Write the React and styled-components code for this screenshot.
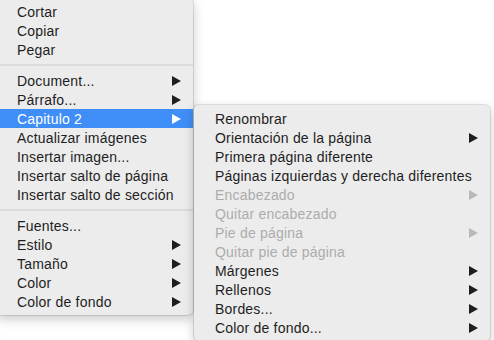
import React from 'react';
import styled, { createGlobalStyle } from 'styled-components';

const GlobalStyle = createGlobalStyle`
  html, body {
    margin: 0;
    background: #ffffff;
    overflow: hidden;
  }
`;

const Desk = styled.div`
  display: flex;
  align-items: flex-start;
  gap: 1px;
  width: 494px;
  height: 340px;
  font-family: "Liberation Sans", Arial, sans-serif;
`;

const Menu = styled.div`
  flex: none;
  width: ${p => p.$width}px;
  margin-top: ${p => p.$top}px;
  margin-left: ${p => p.$left || 0}px;
  padding: 4px 0;
  background: #ececec;
  border-radius: 5px;
  box-shadow: 0 0 0 1px rgba(0, 0, 0, 0.1), 0 4px 12px rgba(0, 0, 0, 0.22);
`;

const Item = styled.div`
  display: flex;
  align-items: center;
  justify-content: space-between;
  height: 19px;
  padding: 0 12px 0 21px;
  font-size: 14px;
  letter-spacing: 0.2px;
  white-space: nowrap;
  color: ${p => (p.$active ? '#ffffff' : p.$disabled ? '#acacac' : '#1e1e1e')};
  background: ${p => (p.$active ? '#3f8ef7' : 'transparent')};
`;

const Arrow = styled.span`
  width: 0;
  height: 0;
  border-left: 9px solid currentColor;
  border-top: 5px solid transparent;
  border-bottom: 5px solid transparent;
  opacity: ${p => (p.$disabled ? 0.8 : 1)};
`;

const Separator = styled.div`
  height: 2px;
  margin: 5px 0;
  background: #dcdcdc;
`;

const mainMenu = [
  [{ label: 'Cortar' }, { label: 'Copiar' }, { label: 'Pegar' }],
  [
    { label: 'Document...', sub: true },
    { label: 'Párrafo...', sub: true },
    { label: 'Capitulo 2', sub: true, active: true },
    { label: 'Actualizar imágenes' },
    { label: 'Insertar imagen...' },
    { label: 'Insertar salto de página' },
    { label: 'Insertar salto de sección' },
  ],
  [
    { label: 'Fuentes...' },
    { label: 'Estilo', sub: true },
    { label: 'Tamaño', sub: true },
    { label: 'Color', sub: true },
    { label: 'Color de fondo', sub: true },
  ],
];

const chapterMenu = [
  [
    { label: 'Renombrar' },
    { label: 'Orientación de la página', sub: true },
    { label: 'Primera página diferente' },
    { label: 'Páginas izquierdas y derecha diferentes' },
    { label: 'Encabezado', sub: true, disabled: true },
    { label: 'Quitar encabezado', disabled: true },
    { label: 'Pie de página', sub: true, disabled: true },
    { label: 'Quitar pie de página', disabled: true },
    { label: 'Márgenes', sub: true },
    { label: 'Rellenos', sub: true },
    { label: 'Bordes...', sub: true },
    { label: 'Color de fondo...', sub: true },
  ],
];

const MenuGroups = ({ groups }) =>
  groups.map((group, gi) => (
    <React.Fragment key={gi}>
      {gi > 0 && <Separator />}
      {group.map(item => (
        <Item key={item.label} $active={item.active} $disabled={item.disabled}>
          <span>{item.label}</span>
          {item.sub && <Arrow $disabled={item.disabled} />}
        </Item>
      ))}
    </React.Fragment>
  ));

const App = () => (
  <>
    <GlobalStyle />
    <Desk>
      <Menu $width={197} $top={-2} $left={-4}>
        <MenuGroups groups={mainMenu} />
      </Menu>
      <Menu $width={296} $top={105}>
        <MenuGroups groups={chapterMenu} />
      </Menu>
    </Desk>
  </>
);

export default App;
